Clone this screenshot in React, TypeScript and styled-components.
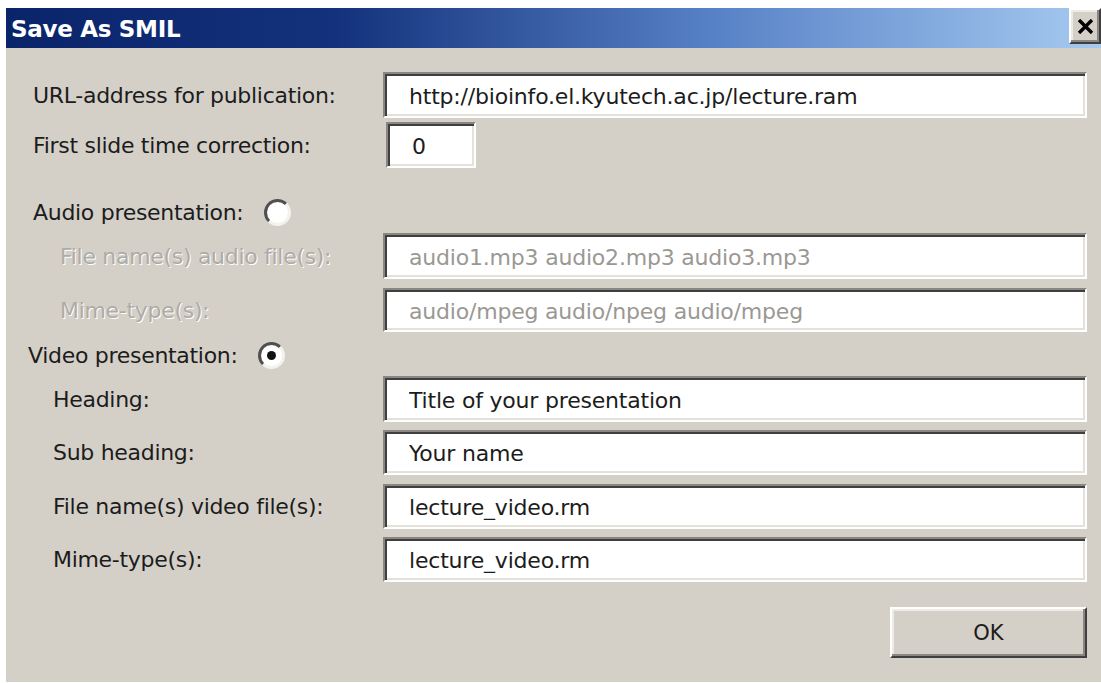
import React from 'react'
import styled, { createGlobalStyle, css } from 'styled-components'

const GlobalStyle = createGlobalStyle`
  html, body {
    margin: 0;
    background: #ffffff;
  }
  body {
    font-family: "DejaVu Sans", "Liberation Sans", sans-serif;
  }
`

const sunken = css`
  border: 2px solid;
  border-color: #8a8782 #ffffff #ffffff #8a8782;
  box-shadow: inset 2px 2px 0 #3f3f3f, inset -2px -2px 0 #e4e1db;
`

const raised = css`
  border: 2px solid;
  border-color: #ffffff #3f3f3f #3f3f3f #ffffff;
  box-shadow: inset -2px -2px 0 #8a8782, inset 2px 2px 0 #eeebe5;
`

const Window = styled.div`
  margin: 8px 0 0 6px;
  width: 1095px;
  height: 674px;
  background: #d4d0c8;
  display: flex;
  flex-direction: column;
  box-sizing: border-box;
`

const TitleBar = styled.div`
  height: 40px;
  flex: none;
  display: flex;
  align-items: flex-start;
  justify-content: space-between;
  padding-left: 5px;
  background: linear-gradient(to right, #0a246a 0%, #13317c 30%, #5680c6 64%, #a6caf0 100%);
`

const Title = styled.span`
  margin-top: 8px;
  color: #ffffff;
  font-weight: bold;
  font-size: 23px;
  letter-spacing: -0.3px;
`

const CloseButton = styled.button`
  ${raised};
  width: 32px;
  height: 36px;
  padding: 0;
  background: #d4d0c8;
  display: flex;
  align-items: center;
  justify-content: center;
`

const Body = styled.div`
  padding: 24px 14px 0 27px;
  display: flex;
  flex-direction: column;
`

const FieldRow = styled.div<{ $top: number; $height?: number }>`
  display: grid;
  grid-template-columns: 350px 1fr;
  align-items: center;
  height: ${p => p.$height ?? 46}px;
  margin-top: ${p => p.$top}px;
`

const Label = styled.span<{ $indent?: number; $disabled?: boolean }>`
  padding-left: ${p => p.$indent ?? 0}px;
  font-size: 22px;
  letter-spacing: -0.3px;
  color: ${p => (p.$disabled ? '#aeaba5' : '#1c1c1c')};
  text-shadow: ${p => (p.$disabled ? '1px 1px 0 #ffffff' : 'none')};
  white-space: nowrap;
`

const TextBox = styled.input<{ $short?: boolean; $disabled?: boolean }>`
  ${sunken};
  box-sizing: border-box;
  height: 100%;
  width: ${p => (p.$short ? '90px' : '100%')};
  margin-left: ${p => (p.$short ? '3px' : '0')};
  padding: 2px 0 0 24px;
  background: #ffffff;
  font-family: "DejaVu Sans", "Liberation Sans", sans-serif;
  font-size: 22px;
  letter-spacing: -0.2px;
  color: ${p => (p.$disabled ? '#9a9893' : '#1c1c1c')};
  outline: none;
`

const SectionRow = styled.div<{ $top: number; $shift?: number }>`
  display: flex;
  align-items: center;
  height: 36px;
  margin-top: ${p => p.$top}px;
  margin-left: ${p => p.$shift ?? 0}px;
`

const Radio = styled.span<{ $checked?: boolean }>`
  position: relative;
  margin-left: 20px;
  width: 27px;
  height: 27px;
  box-sizing: border-box;
  border-radius: 50%;
  border: 3px solid;
  border-color: #505050 #f4f2ee #f4f2ee #505050;
  background: #ffffff;

  &::after {
    content: '';
    display: ${p => (p.$checked ? 'block' : 'none')};
    position: absolute;
    left: 50%;
    top: 50%;
    width: 9px;
    height: 9px;
    margin: -4.5px 0 0 -4.5px;
    border-radius: 50%;
    background: #111111;
  }
`

const Footer = styled.div`
  display: flex;
  justify-content: flex-end;
  margin-top: 25px;
`

const OkButton = styled.button`
  ${raised};
  width: 197px;
  height: 51px;
  background: #d4d0c8;
  font-family: "DejaVu Sans", "Liberation Sans", sans-serif;
  font-size: 21px;
  color: #1c1c1c;
`

type Field = { label: string; value: string; top: number; height?: number; indent: number }

const audioFields: Field[] = [
  { label: 'File name(s) audio file(s):', value: 'audio1.mp3 audio2.mp3 audio3.mp3', top: 3, indent: 27 },
  { label: 'Mime-type(s):', value: 'audio/mpeg audio/npeg audio/mpeg', top: 9, height: 44, indent: 27 },
]

const videoFields: Field[] = [
  { label: 'Heading:', value: 'Title of your presentation', top: 3, indent: 20 },
  { label: 'Sub heading:', value: 'Your name', top: 8, height: 45, indent: 20 },
  { label: 'File name(s) video file(s):', value: 'lecture_video.rm', top: 9, height: 45, indent: 20 },
  { label: 'Mime-type(s):', value: 'lecture_video.rm', top: 8, height: 45, indent: 20 },
]

const App = () => {
  return (
    <>
      <GlobalStyle />
      <Window>
        <TitleBar>
          <Title>Save As SMIL</Title>
          <CloseButton aria-label="Close">
            <svg width="17" height="15" viewBox="0 0 17 15">
              <path d="M2 1 L15 14 M15 1 L2 14" stroke="#000" strokeWidth="3.4" />
            </svg>
          </CloseButton>
        </TitleBar>
        <Body>
          <FieldRow $top={0}>
            <Label>URL-address for publication:</Label>
            <TextBox readOnly value="http://bioinfo.el.kyutech.ac.jp/lecture.ram" />
          </FieldRow>
          <FieldRow $top={4}>
            <Label>First slide time correction:</Label>
            <TextBox readOnly $short value="0" />
          </FieldRow>

          <SectionRow $top={26}>
            <Label>Audio presentation:</Label>
            <Radio />
          </SectionRow>
          {audioFields.map((f, i) => (
            <FieldRow key={i} $top={f.top} $height={f.height}>
              <Label $indent={f.indent} $disabled>{f.label}</Label>
              <TextBox readOnly $disabled value={f.value} />
            </FieldRow>
          ))}

          <SectionRow $top={5} $shift={-5}>
            <Label>Video presentation:</Label>
            <Radio $checked />
          </SectionRow>
          {videoFields.map((f, i) => (
            <FieldRow key={i} $top={f.top} $height={f.height}>
              <Label $indent={f.indent}>{f.label}</Label>
              <TextBox readOnly value={f.value} />
            </FieldRow>
          ))}

          <Footer>
            <OkButton>OK</OkButton>
          </Footer>
        </Body>
      </Window>
    </>
  )
}

export default App
